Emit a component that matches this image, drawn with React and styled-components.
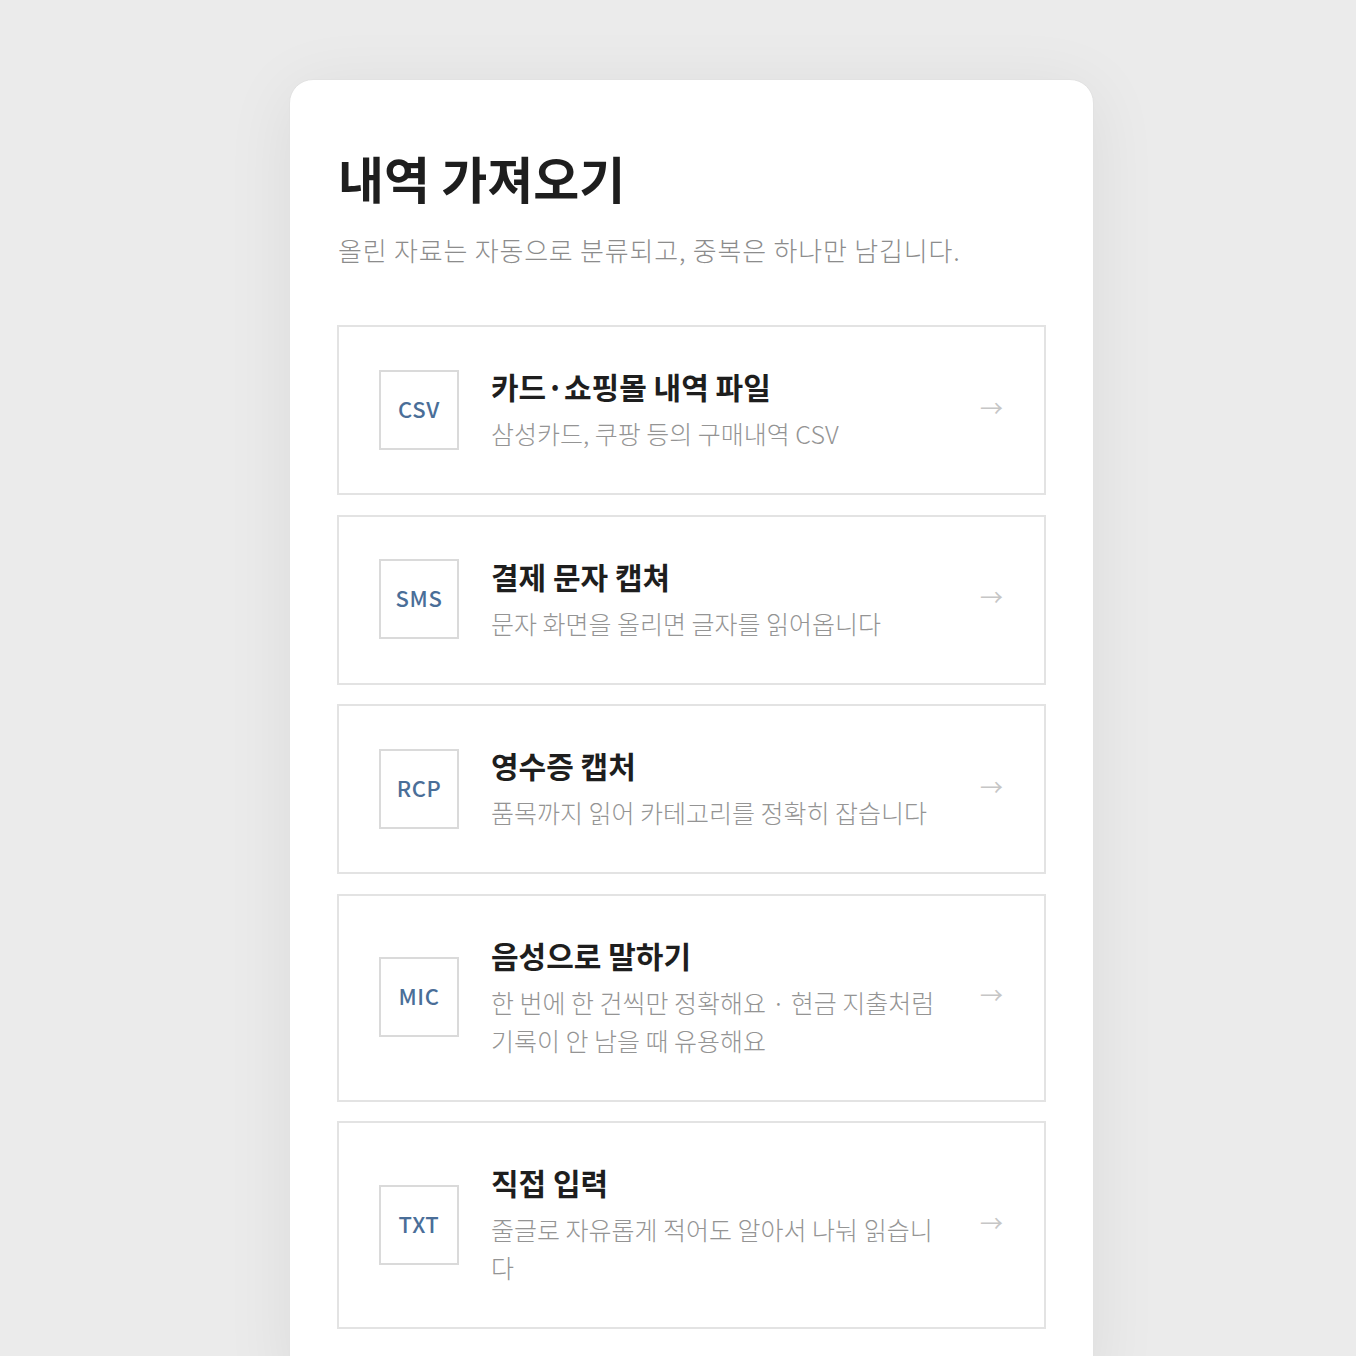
import React from "react";
import styled, { createGlobalStyle } from "styled-components";

const sources = [
  { code: "CSV", title: "카드·쇼핑몰 내역 파일", desc: "삼성카드, 쿠팡 등의 구매내역 CSV" },
  { code: "SMS", title: "결제 문자 캡쳐", desc: "문자 화면을 올리면 글자를 읽어옵니다" },
  { code: "RCP", title: "영수증 캡처", desc: "품목까지 읽어 카테고리를 정확히 잡습니다" },
  {
    code: "MIC",
    title: "음성으로 말하기",
    desc: "한 번에 한 건씩만 정확해요 · 현금 지출처럼 기록이 안 남을 때 유용해요",
  },
  { code: "TXT", title: "직접 입력", desc: "줄글로 자유롭게 적어도 알아서 나눠 읽습니다" },
];

const App = () => {
  return (
    <>
      <GlobalStyle />
      <Page>
        <Card>
          <Heading>내역 가져오기</Heading>
          <Lead>올린 자료는 자동으로 분류되고, 중복은 하나만 남깁니다.</Lead>
          <List>
            {sources.map((s) => (
              <Option key={s.code}>
                <Badge>{s.code}</Badge>
                <Body>
                  <Title>{s.title}</Title>
                  <Desc>{s.desc}</Desc>
                </Body>
                <Arrow>→</Arrow>
              </Option>
            ))}
          </List>
        </Card>
      </Page>
    </>
  );
};

export default App;

const GlobalStyle = createGlobalStyle`
  html, body {
    margin: 0;
    background: #ebebeb;
    font-family: "Noto Sans CJK KR", "Noto Sans", sans-serif;
  }
`;

const Page = styled.div`
  height: 1356px;
  overflow: hidden;
  padding: 79px 0 0 289px;
  box-sizing: border-box;
`;

const Card = styled.div`
  width: 805px;
  box-sizing: border-box;
  background: #fff;
  border: 1px solid #e2e2e2;
  border-radius: 24px;
  box-shadow: 0 10px 70px rgba(0, 0, 0, 0.07);
  padding: 66px 47px 60px;
`;

const Heading = styled.h1`
  margin: 0 0 0 1px;
  font-size: 50px;
  line-height: 62px;
  font-weight: 700;
  color: #1e1e1e;
`;

const Lead = styled.p`
  margin: 25px 0 0 1px;
  font-size: 26px;
  line-height: 34px;
  font-weight: 300;
  letter-spacing: 0.8px;
  color: #8c8c8c;
`;

const List = styled.div`
  margin-top: 58px;
  display: flex;
  flex-direction: column;
  gap: 19.5px;
`;

const Option = styled.div`
  display: flex;
  align-items: center;
  gap: 32px;
  padding: 40px 41px 41px 40px;
  border: 2px solid #e3e3e3;
  cursor: pointer;
`;

const Badge = styled.div`
  flex: none;
  width: 80px;
  height: 80px;
  box-sizing: border-box;
  border: 2px solid #dadada;
  padding-bottom: 4px;
  display: flex;
  align-items: center;
  justify-content: center;
  font-size: 22px;
  font-weight: 500;
  letter-spacing: 0.6px;
  color: #4a6e98;
`;

const Body = styled.div`
  flex: 1;
  min-width: 0;
`;

const Title = styled.div`
  font-size: 30px;
  line-height: 38px;
  font-weight: 700;
  color: #1e1e1e;
`;

const Desc = styled.div`
  margin-top: 9px;
  font-size: 25px;
  line-height: 38px;
  font-weight: 300;
  color: #949494;
`;

const Arrow = styled.div`
  flex: none;
  width: 28px;
  padding-bottom: 6px;
  font-size: 23px;
  color: #c6c6c6;
  text-align: right;
`;
